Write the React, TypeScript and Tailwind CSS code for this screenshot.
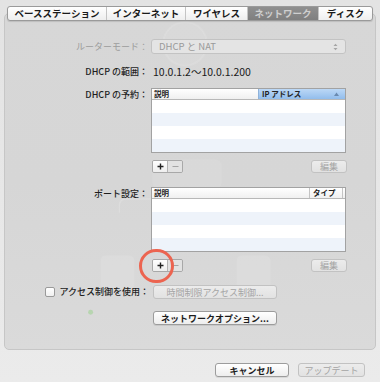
const jp = "font-['Noto_Sans_CJK_JP','Noto_Sans',sans-serif]";

const tabs = [
  { label: 'ベースステーション', w: 'w-[98px]' },
  { label: 'インターネット', w: 'w-[79px]' },
  { label: 'ワイヤレス', w: 'w-[62px]' },
  { label: 'ネットワーク', w: 'w-[71px]', active: true },
  { label: 'ディスク', w: 'w-[54px]' },
];

function Btn({ children, disabled, className = '' }: { children: React.ReactNode; disabled?: boolean; className?: string }) {
  return (
    <div
      className={`flex items-center justify-center rounded-[3px] border text-[9px] leading-none ${
        disabled
          ? 'border-[#c2c2c2] bg-gradient-to-b from-[#ececec] to-[#e2e2e2] text-[#a4a4a4]'
          : 'border-[#9c9c9c] bg-gradient-to-b from-white to-[#ededed] font-semibold text-[#1c1c1c] shadow-[0_1px_0_rgba(0,0,0,0.08)]'
      } ${className}`}
    >
      {children}
    </div>
  );
}

function PlusMinus() {
  return (
    <div className="flex h-[13px] w-[31px] overflow-hidden rounded-[2px] border border-[#a8a8a8]">
      <div className="flex w-[15px] items-center justify-center border-r border-[#b4b4b4] bg-gradient-to-b from-white to-[#eeeeee]">
        <svg width="7" height="7" viewBox="0 0 7 7">
          <path d="M3.5 0.5v6M0.5 3.5h6" stroke="#222" strokeWidth="1.4" />
        </svg>
      </div>
      <div className="flex flex-1 items-center justify-center bg-[#e2e2e2]">
        <svg width="7" height="7" viewBox="0 0 7 7">
          <path d="M0.5 3.5h6" stroke="#a4a4a4" strokeWidth="1.2" />
        </svg>
      </div>
    </div>
  );
}

function Rows() {
  return (
    <div className="flex flex-col">
      <div className="h-[13px] bg-white" />
      <div className="h-[13px] bg-[#eef3fa]" />
      <div className="h-[13px] bg-white" />
      <div className="h-[13px] bg-[#eef3fa]" />
    </div>
  );
}

function Label({ children, muted }: { children: React.ReactNode; muted?: boolean }) {
  return (
    <div className={`w-[143px] shrink-0 text-right text-[9px] leading-[12px] ${muted ? 'text-[#9c9c9c]' : 'font-medium text-[#1e1e1e]'}`}>
      {children}
    </div>
  );
}

function Ghost() {
  return (
    <svg className="pointer-events-none absolute inset-0 h-full w-full" viewBox="0 0 372 337">
      <circle cx="181" cy="30" r="22" fill="#ffffff" fillOpacity="0.05" stroke="#ffffff" strokeOpacity="0.1" strokeWidth="2" />
      <rect x="148" y="146" width="70" height="30" rx="7" fill="#ffffff" fillOpacity="0.08" />
      <rect x="96" y="243" width="34" height="34" rx="5" fill="#ffffff" fillOpacity="0.1" />
      <rect x="233" y="243" width="34" height="34" rx="5" fill="#ffffff" fillOpacity="0.1" />
      <path d="M115 200 v-8 a6 6 0 0 1 6 -6 h118 a6 6 0 0 1 6 6 v8" fill="none" stroke="#ffffff" strokeOpacity="0.15" strokeWidth="1.5" />
      <circle cx="86" cy="300" r="2.5" fill="#8fd07f" fillOpacity="0.45" />
    </svg>
  );
}

export default function App() {
  return (
    <div className={`relative flex h-[382px] w-[380px] flex-col overflow-hidden bg-gradient-to-b from-[#e3e3e3] to-[#ebebeb] px-[4px] ${jp}`}>
      <div className="relative mt-[13px] flex h-[337px] flex-col rounded-[5px] border border-[#c6c6c6] bg-gradient-to-b from-[#d7d7d7] via-[#d6d6d6] to-[#dadada]">
        <Ghost />
        <div className="relative -mt-[8px] flex justify-center">
          <div className="flex h-[15px] overflow-hidden rounded-[3px] border border-[#9a9a9a] bg-gradient-to-b from-white to-[#eeeeee] shadow-[0_1px_1px_rgba(0,0,0,0.12)]">
            {tabs.map((t, i) => (
              <div
                key={t.label}
                className={`flex ${t.w} items-center justify-center text-[9.5px] font-bold leading-none ${
                  i > 0 ? 'border-l border-[#c4c4c4]' : ''
                } ${t.active ? 'bg-gradient-to-b from-[#8f8f8f] to-[#7f7f7f] text-[#cfcfcf]' : 'text-[#1a1a1a]'}`}
              >
                {t.label}
              </div>
            ))}
          </div>
        </div>

        <div className="relative flex flex-col">
          <div className="mt-[18px] flex items-center gap-[3px]">
            <Label muted>ルーターモード：</Label>
            <div className="flex h-[15px] w-[195px] items-center justify-between rounded-[3px] border border-[#c3c3c3] bg-[#e4e4e4] pl-[7px] pr-[7px] text-[9.5px] text-[#9a9a9a]">
              <span>DHCP と NAT</span>
              <svg width="5" height="8" viewBox="0 0 5 8">
                <path d="M0.5 3L2.5 0.8L4.5 3ZM0.5 5L2.5 7.2L4.5 5Z" fill="#a5a5a5" />
              </svg>
            </div>
          </div>

          <div className="mt-[11px] flex h-[14px] items-center gap-[3px]">
            <Label>DHCP の範囲：</Label>
            <div className="pl-[2px] text-[10.5px] text-[#1a1a1a]">10.0.1.2〜10.0.1.200</div>
          </div>

          <div className="mt-[9px] flex items-start gap-[3px]">
            <div className="pt-[1px]">
              <Label>DHCP の予約：</Label>
            </div>
            <div className="w-[195px] border border-[#a2a2a2] bg-white">
              <div className="flex h-[11px] border-b border-[#b8b8b8] text-[7.5px] font-bold leading-none text-[#222]">
                <div className="flex w-[106px] items-center bg-gradient-to-b from-white to-[#f0f0f0] pl-[2px]">説明</div>
                <div className="flex flex-1 items-center justify-between border-l border-[#8fb2da] bg-gradient-to-b from-[#bcd8f6] to-[#92bdec] pl-[3px] pr-[6px]">
                  <span>IP アドレス</span>
                  <svg width="5" height="4" viewBox="0 0 5 4">
                    <path d="M0 4L2.5 0.5L5 4Z" fill="#6a8ab0" />
                  </svg>
                </div>
              </div>
              <Rows />
            </div>
          </div>

          <div className="mt-[7px] flex items-center">
            <div className="w-[147px]" />
            <PlusMinus />
            <div className="flex-1" />
            <Btn disabled className="mr-[28px] h-[13px] w-[36px]">編集</Btn>
          </div>

          <div className="mt-[14px] flex items-start gap-[3px]">
            <div className="pt-[1px]">
              <Label>ポート設定：</Label>
            </div>
            <div className="w-[195px] border border-[#a2a2a2] bg-white">
              <div className="flex h-[11px] border-b border-[#b8b8b8] bg-gradient-to-b from-white to-[#f0f0f0] text-[7.5px] font-bold leading-none text-[#222]">
                <div className="flex w-[157px] items-center pl-[2px]">説明</div>
                <div className="flex flex-1 items-center border-l border-r border-[#c4c4c4] pl-[3px]">タイプ</div>
                <div className="w-[2px]" />
              </div>
              <Rows />
            </div>
          </div>

          <div className="mt-[7px] flex items-center">
            <div className="w-[147px]" />
            <PlusMinus />
            <div className="flex-1" />
            <Btn disabled className="mr-[28px] h-[13px] w-[36px]">編集</Btn>
          </div>

          <div className="mt-[13px] flex items-center">
            <div className="flex w-[148px] items-center justify-end gap-[4px] pr-[4px]">
              <div className="h-[10px] w-[10px] rounded-[2px] border border-[#9a9a9a] bg-gradient-to-b from-white to-[#f0f0f0]" />
              <span className="text-[9px] font-medium text-[#1e1e1e]">アクセス制御を使用：</span>
            </div>
            <Btn disabled className="h-[14px] w-[124px]">時間制限アクセス制御...</Btn>
          </div>

          <div className="mt-[12px] flex items-center">
            <div className="w-[148px]" />
            <Btn className="h-[14px] w-[124px]">ネットワークオプション...</Btn>
          </div>
        </div>
      </div>

      <div className="mt-[13px] flex justify-end gap-[9px] pr-[11px]">
        <Btn className="h-[14px] w-[74px]">キャンセル</Btn>
        <Btn disabled className="h-[14px] w-[67px]">アップデート</Btn>
      </div>

      <div className="pointer-events-none absolute left-[139px] top-[249px] h-[34px] w-[35px] rounded-full border-[3px] border-[#ec6450]" />
    </div>
  );
}
